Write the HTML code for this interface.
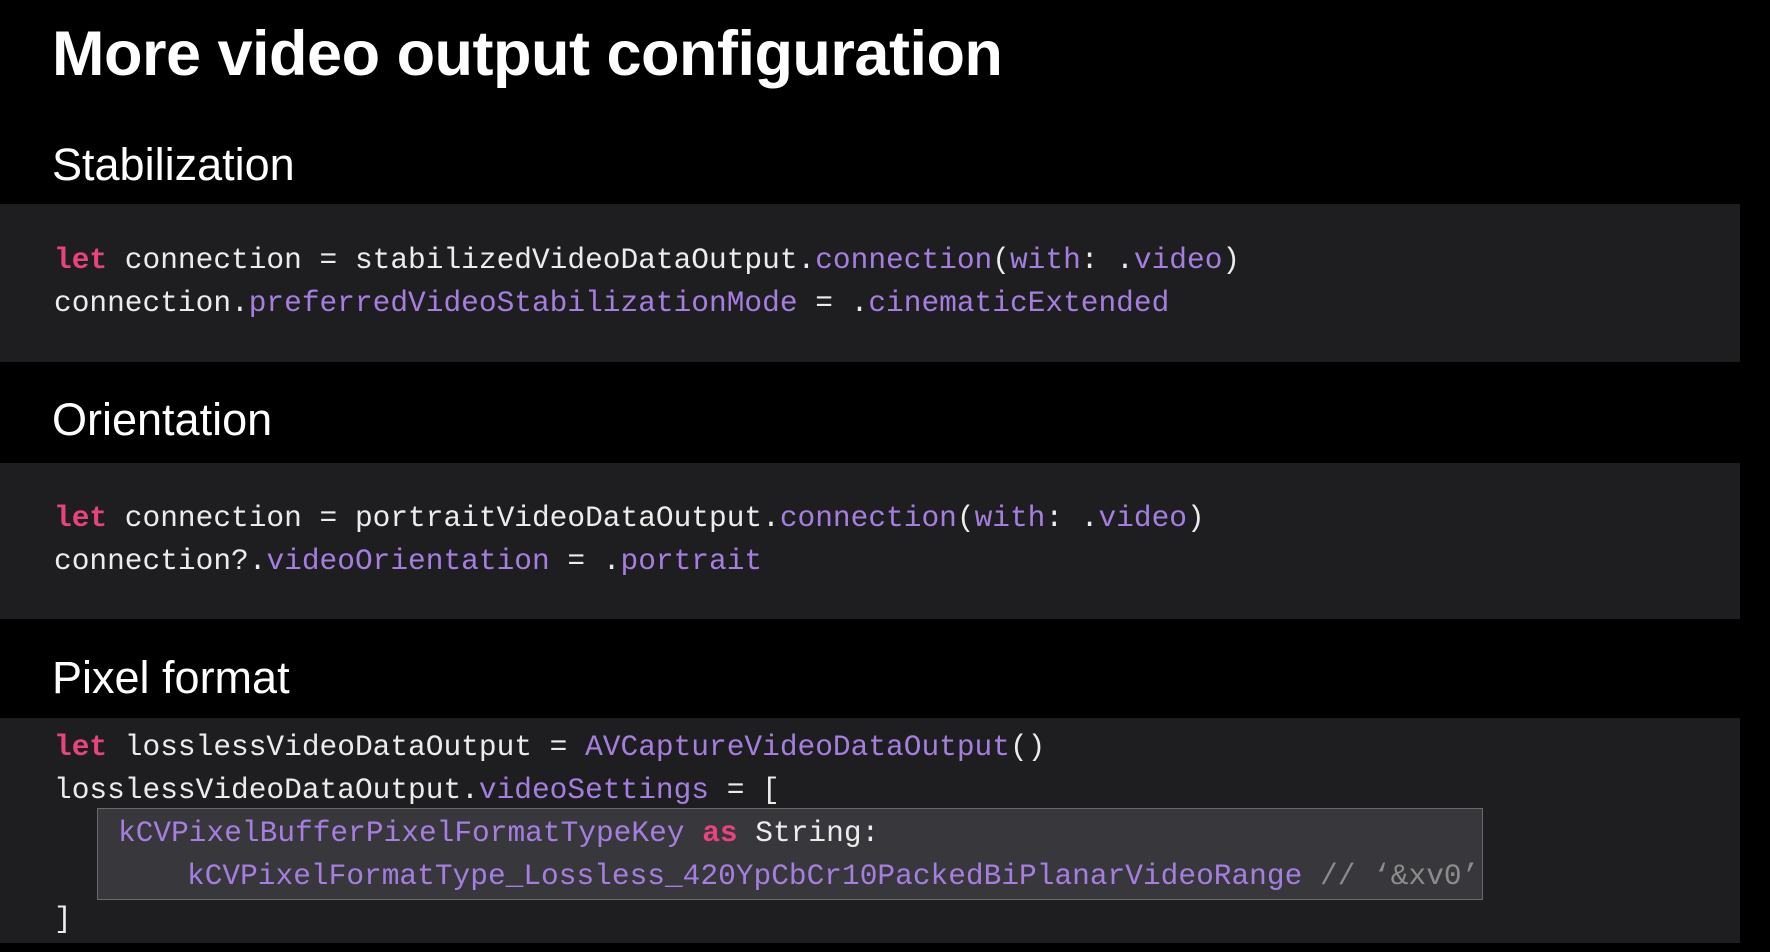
<!DOCTYPE html>
<html><head><meta charset="utf-8"><style>
html,body{margin:0;padding:0;background:#000;width:1770px;height:952px;overflow:hidden;position:relative;font-family:"Liberation Sans",sans-serif;color:#fff}
.t{position:absolute;left:52px;white-space:nowrap}
h1{position:absolute;left:52px;top:18px;margin:0;font-size:63px;font-weight:bold;letter-spacing:-0.5px}
.h{font-size:45px}
.blk{position:absolute;left:0;width:1740px;background:#1e1e20}
.c{position:absolute;left:54px;font-family:"Liberation Mono",monospace;font-size:29.5px;color:#ececec;white-space:pre;line-height:1}
.k{color:#e8437f;font-weight:bold}
.p{color:#a57ee0}
.g{color:#8c8c8c}
.hl{position:absolute;left:97px;top:808px;width:1386px;height:92px;background:#38383c;border:1px solid #6a6a6e;box-sizing:border-box}
</style></head><body>
<h1>More video output configuration</h1>
<div class="t h" style="top:139px">Stabilization</div>
<div class="blk" style="top:204px;height:158px"></div>
<div class="c" style="top:246px"><span class="k">let</span> connection = stabilizedVideoDataOutput.<span class="p">connection</span>(<span class="p">with</span>: .<span class="p">video</span>)</div>
<div class="c" style="top:289px">connection.<span class="p">preferredVideoStabilizationMode</span> = .<span class="p">cinematicExtended</span></div>
<div class="t h" style="top:394px">Orientation</div>
<div class="blk" style="top:463px;height:156px"></div>
<div class="c" style="top:504px"><span class="k">let</span> connection = portraitVideoDataOutput.<span class="p">connection</span>(<span class="p">with</span>: .<span class="p">video</span>)</div>
<div class="c" style="top:547px">connection?.<span class="p">videoOrientation</span> = .<span class="p">portrait</span></div>
<div class="t h" style="top:652px">Pixel format</div>
<div class="blk" style="top:718px;height:225px"></div>
<div class="hl"></div>
<div class="c" style="top:733px"><span class="k">let</span> losslessVideoDataOutput = <span class="p">AVCaptureVideoDataOutput</span>()</div>
<div class="c" style="top:776px">losslessVideoDataOutput.<span class="p">videoSettings</span> = [</div>
<div class="c" style="top:819px;left:118px"><span class="p">kCVPixelBufferPixelFormatTypeKey</span> <span class="k">as</span> String:</div>
<div class="c" style="top:862px;left:187px"><span class="p">kCVPixelFormatType_Lossless_420YpCbCr10PackedBiPlanarVideoRange</span> <span class="g">// ‘&amp;xv0’</span></div>
<div class="c" style="top:905px">]</div>
</body></html>
